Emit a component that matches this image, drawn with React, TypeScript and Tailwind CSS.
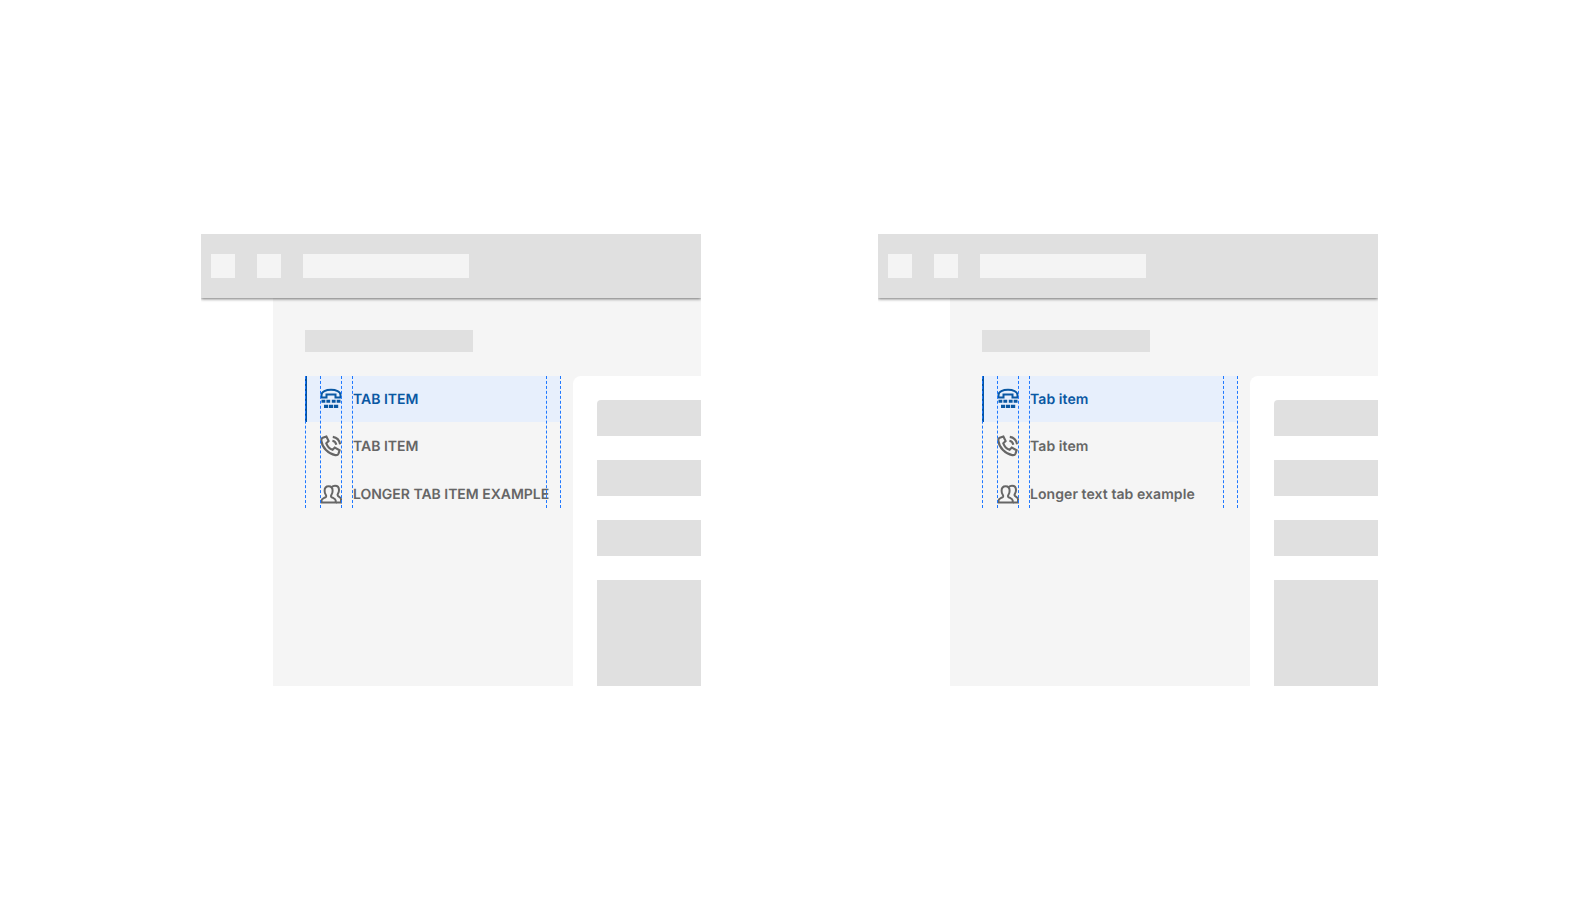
import React from "react";

function KeypadPhone() {
  return (
    <svg viewBox="0 0 24 24" className="w-6 h-6 shrink-0" fill="none" stroke="currentColor">
      <path strokeWidth="2" d="M2.500 10.500V8C2.500 4.600 7 2.700 12 2.700s9.500 1.900 9.500 5.300v2.500h-5V7.600h-9v2.900z" />
      <path fill="currentColor" stroke="none" d="M2.500 12.800h3.800v3H2.500zM7.400 12.800h3.800v3H7.400zM12.800 12.800h3.800v3h-3.800zM17.700 12.800h3.800v3h-3.800zM5 17.800h4.200V21H5zM10 17.800h4.200V21H10zM15 17.800h4.200V21H15z" />
    </svg>
  );
}

function VoicePhone() {
  return (
    <svg viewBox="0 0 24 24" className="w-6 h-6 shrink-0" fill="none" stroke="currentColor" strokeWidth="2.100">
      <path d="M7.400 2.600 3.700 3.800C2.500 4.300 2.200 5.500 2.400 7c.8 6.500 6.800 13 13.800 14.100 1.500.2 2.800-.2 3.300-1.500l1.100-3.300-4.800-2.700-2.200 2.200c-2.600-1-5.300-3.800-6.300-6.500l2.300-2.200z" />
      <path d="M13.400 6.800c2.100.4 3.500 1.900 3.900 4" />
      <path d="M13.800 2.900c3.900.6 6.600 3.300 7.300 7.300" />
    </svg>
  );
}

function People() {
  return (
    <svg viewBox="0 0 24 24" className="w-6 h-6 shrink-0" fill="none" stroke="currentColor" strokeWidth="2">
      <path d="M2.500 20.500v-2c0-2 3.500-2.500 4.500-3.700.5-.7.300-1.300-.2-2-.8-1-1.200-2.300-1.200-4 0-2.700 1.700-4.500 4-4.500s4 1.800 4 4.500c0 1.700-.4 3-1.200 4-.5.7-.7 1.300-.2 2 1 1.200 4.500 1.700 4.500 3.700v2z" />
      <path d="M12.800 5c.8-.9 1.900-1.300 3.200-1.300 2.400 0 4 1.800 4 4.400 0 1.600-.4 2.800-1.100 3.800-.5.700-.5 1.300 0 1.900.9 1.100 3.100 1.600 3.100 3.300v3.400h-5" />
    </svg>
  );
}

const guides = ["left-0", "left-[15px]", "left-[36px]", "left-[47px]", "left-[241px]", "left-[255px]"];

function Guide({ position }: { position: string }) {
  return <div className={`absolute top-0 bottom-0 w-0 border-l border-dashed border-[#1f78ff] ${position}`} />;
}

function Label({ text }: { text: string }) {
  return <span className="ml-[10px] text-[14px] font-semibold whitespace-nowrap">{text}</span>;
}

function Frame({ labels, tracking }: { labels: string[]; tracking: string }) {
  return (
    <div className={`w-[500px] h-[452px] shrink-0 overflow-hidden relative ${tracking}`}>
      <div className="relative z-10 h-16 bg-[#e0e0e0] flex items-center pl-[10px] shadow-[0_1px_3px_rgba(0,0,0,0.55)]">
        <div className="w-6 h-6 bg-[#f4f4f4]" />
        <div className="w-6 h-6 bg-[#f4f4f4] ml-[22px]" />
        <div className="w-[166px] h-6 bg-[#f4f4f4] ml-[22px]" />
      </div>
      <div className="ml-[72px] h-[388px] bg-[#f5f5f5] flex">
        <div className="w-[300px] shrink-0 pt-8 pl-8">
          <div className="w-[168px] h-[22px] bg-[#e0e0e0]" />
          <div className="relative w-[255px] h-[132px] mt-6">
            <div className="h-[46px] bg-[#e7effc] border-l-2 border-[#0353a4] flex items-center pl-[12px] text-[#0a58a3]">
              <KeypadPhone />
              <Label text={labels[0]} />
            </div>
            <div className="h-[48px] flex items-center pl-[14px] text-[#666666]">
              <VoicePhone />
              <Label text={labels[1]} />
            </div>
            <div className="h-[48px] flex items-center pl-[14px] text-[#666666]">
              <People />
              <Label text={labels[2]} />
            </div>
            {guides.map((g) => (
              <Guide key={g} position={g} />
            ))}
          </div>
        </div>
        <div className="mt-[78px] flex-1 bg-white rounded-tl-lg pl-6 pt-6 flex flex-col gap-6 overflow-hidden">
          <div className="h-9 shrink-0 bg-[#e0e0e0] rounded-tl-sm" />
          <div className="h-9 shrink-0 bg-[#e0e0e0]" />
          <div className="h-9 shrink-0 bg-[#e0e0e0]" />
          <div className="h-[106px] shrink-0 bg-[#e0e0e0]" />
        </div>
      </div>
    </div>
  );
}

export default function App() {
  return (
    <div className="min-h-[919px] bg-white pt-[234px] pl-[201px] flex gap-[177px] [font-family:Inter,sans-serif] antialiased [text-rendering:geometricPrecision]">
      <Frame labels={["TAB ITEM", "TAB ITEM", "LONGER TAB ITEM EXAMPLE"]} tracking="tracking-[-0.02px]" />
      <Frame labels={["Tab item", "Tab item", "Longer text tab example"]} tracking="tracking-[0.07px]" />
    </div>
  );
}
